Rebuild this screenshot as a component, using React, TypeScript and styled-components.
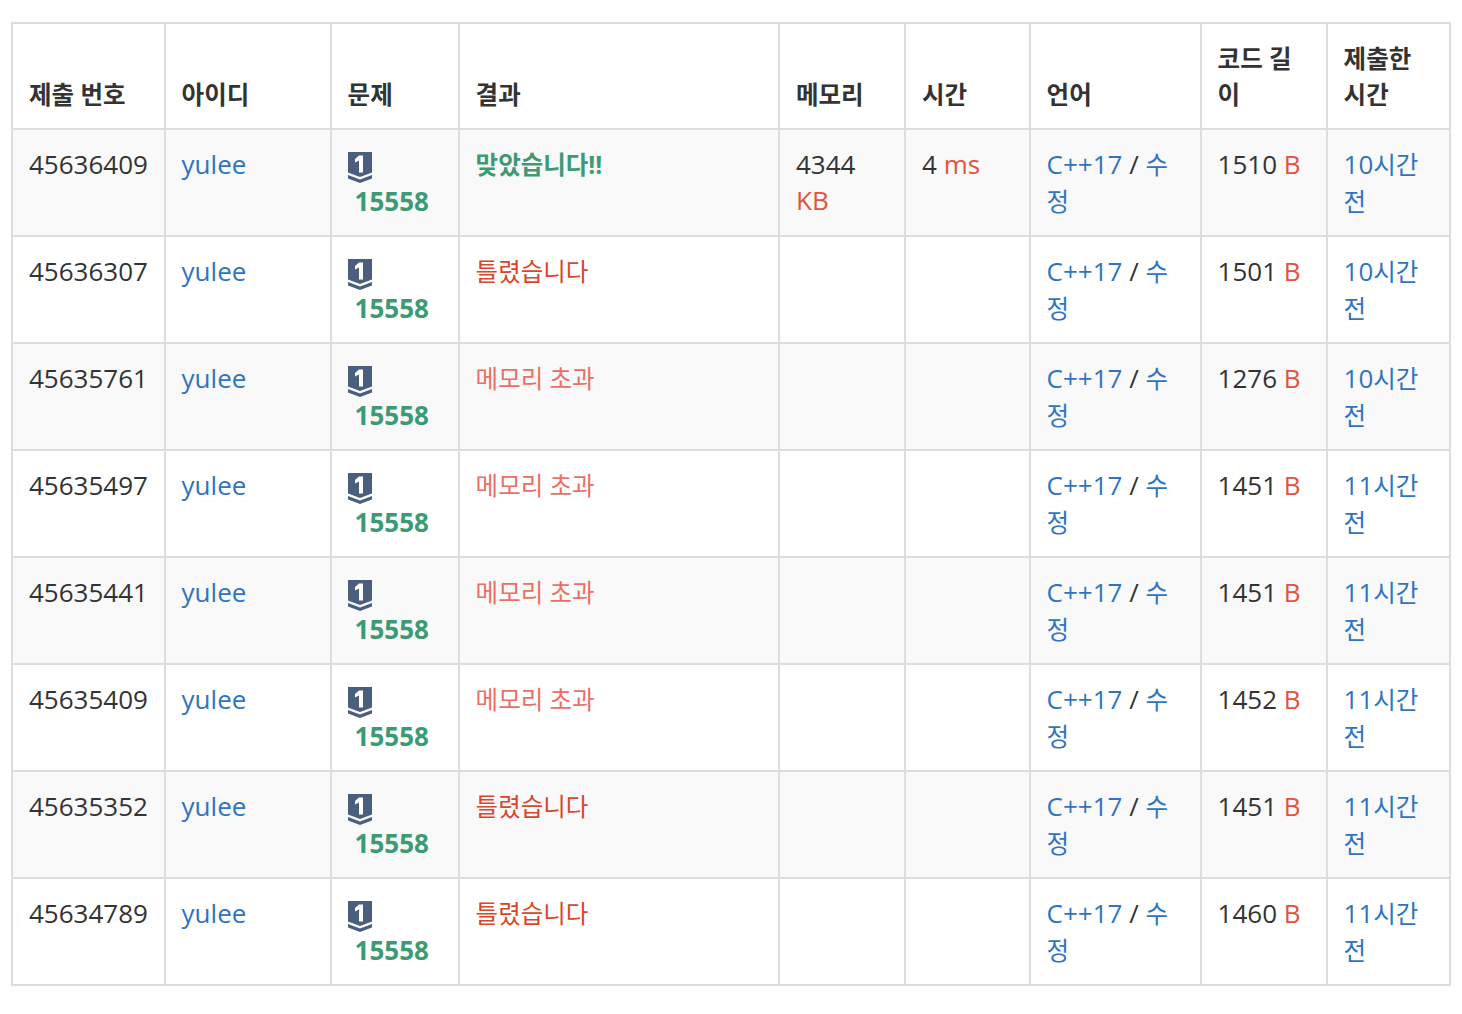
import styled, { createGlobalStyle } from 'styled-components'

interface Submission {
    id: string,
    result: 'ac' | 'wa' | 'mle',
    memory?: string,
    time?: string,
    length: string,
    hours: string
}

const RESULT_TEXT = {
    ac: '맞았습니다!!',
    wa: '틀렸습니다',
    mle: '메모리 초과',
}

const RESULT_COLOR = {
    ac: '#3c9a74',
    wa: '#d9472b',
    mle: '#ea7063',
}

const submissions: Submission[] = [
    { id: '45636409', result: 'ac', memory: '4344', time: '4', length: '1510', hours: '10' },
    { id: '45636307', result: 'wa', length: '1501', hours: '10' },
    { id: '45635761', result: 'mle', length: '1276', hours: '10' },
    { id: '45635497', result: 'mle', length: '1451', hours: '11' },
    { id: '45635441', result: 'mle', length: '1451', hours: '11' },
    { id: '45635409', result: 'mle', length: '1452', hours: '11' },
    { id: '45635352', result: 'wa', length: '1451', hours: '11' },
    { id: '45634789', result: 'wa', length: '1460', hours: '11' },
]

const columns = [
    { title: '제출 번호', width: 153 },
    { title: '아이디', width: 166 },
    { title: '문제', width: 128 },
    { title: '결과', width: 320 },
    { title: '메모리', width: 126 },
    { title: '시간', width: 125 },
    { title: '언어', width: 171 },
    { title: '코드 길이', width: 126 },
    { title: '제출한 시간', width: 123 },
]

const GlobalStyle = createGlobalStyle`
    body {
        margin: 0;
        background: #fff;
        color: #333;
        font-family: "Open Sans", "Noto Sans CJK KR", sans-serif;
        font-size: 26px;
    }
`

const Wrapper = styled.div`
    padding: 22px 11px 0 11px;
`

const Tabl = styled.table`
    width: 1440px;
    table-layout: fixed;
    border-collapse: collapse;
    border: 2px solid #ddd;
    line-height: 36px;
`

const Th = styled.th`
    border: 2px solid #ddd;
    padding: 17px 15.6px 15px 15.6px;
    text-align: left;
    vertical-align: bottom;
    font-weight: 700;
    word-break: break-all;
    font-size: 24.5px;
    &:first-child, &:nth-child(5), &:nth-child(6) {
        padding-left: 16px;
    }
`

const Row = styled.tr<{ $odd: boolean }>`
    background-color: ${p => (p.$odd ? '#f9f9f9' : '#fff')};
`

const Td = styled.td`
    border: 2px solid #ddd;
    padding: 16px 15.6px 15px 15.6px;
    vertical-align: top;
    &:first-child, &:nth-child(5), &:nth-child(6) {
        padding-left: 16px;
    }
`

const Link = styled.a`
    color: #2f74c0;
    text-decoration: none;
`

const Hangul = styled.span`
    font-size: 24.5px;
`

const Unit = styled.span`
    color: #e0533f;
`

const Result = styled.span<{ $kind: Submission['result'] }>`
    color: ${p => RESULT_COLOR[p.$kind]};
    font-size: 24.5px;
    font-weight: ${p => (p.$kind === 'ac' ? 700 : 400)};
`

const ProblemId = styled.a`
    display: block;
    padding-left: 7px;
    color: #3c9a74;
    font-weight: 700;
    text-decoration: none;
`

const BadgeIcon = styled.svg`
    display: block;
    width: 24px;
    height: 32px;
    margin: 6px 0 -1px 0;
`

function TierBadge() {
    return (
        <BadgeIcon viewBox="0 0 24 32">
            <path d="M0 0H24V20.5L12 25L0 20.5Z" fill="#4a5f7e" />
            <path d="M0 23L12 27.5L24 23V26.5L12 31L0 26.5Z" fill="#4a5f7e" />
            <path d="M7 7L11 3.5H15V20.5H11V8.4L7 10.4Z" fill="#fff" />
        </BadgeIcon>
    )
}

export default function App() {
    return (
        <Wrapper>
            <GlobalStyle />
            <Tabl>
                <colgroup>
                    {columns.map(col => (<col key={col.title} width={col.width} />))}
                </colgroup>
                <thead>
                    <tr>
                        {columns.map(col => (<Th key={col.title}>{col.title}</Th>))}
                    </tr>
                </thead>
                <tbody>
                    {submissions.map((sub, i) => (
                        <Row key={sub.id} $odd={i % 2 === 0}>
                            <Td>{sub.id}</Td>
                            <Td><Link>yulee</Link></Td>
                            <Td>
                                <TierBadge />
                                <ProblemId>15558</ProblemId>
                            </Td>
                            <Td><Result $kind={sub.result}>{RESULT_TEXT[sub.result]}</Result></Td>
                            <Td>{sub.memory ? <>{sub.memory} <Unit>KB</Unit></> : ''}</Td>
                            <Td>{sub.time ? <>{sub.time} <Unit>ms</Unit></> : ''}</Td>
                            <Td><Link>C++17</Link> / <Link><Hangul>수정</Hangul></Link></Td>
                            <Td>{sub.length} <Unit>B</Unit></Td>
                            <Td><Link>{sub.hours}<Hangul>시간 전</Hangul></Link></Td>
                        </Row>
                    ))}
                </tbody>
            </Tabl>
        </Wrapper>
    )
}
